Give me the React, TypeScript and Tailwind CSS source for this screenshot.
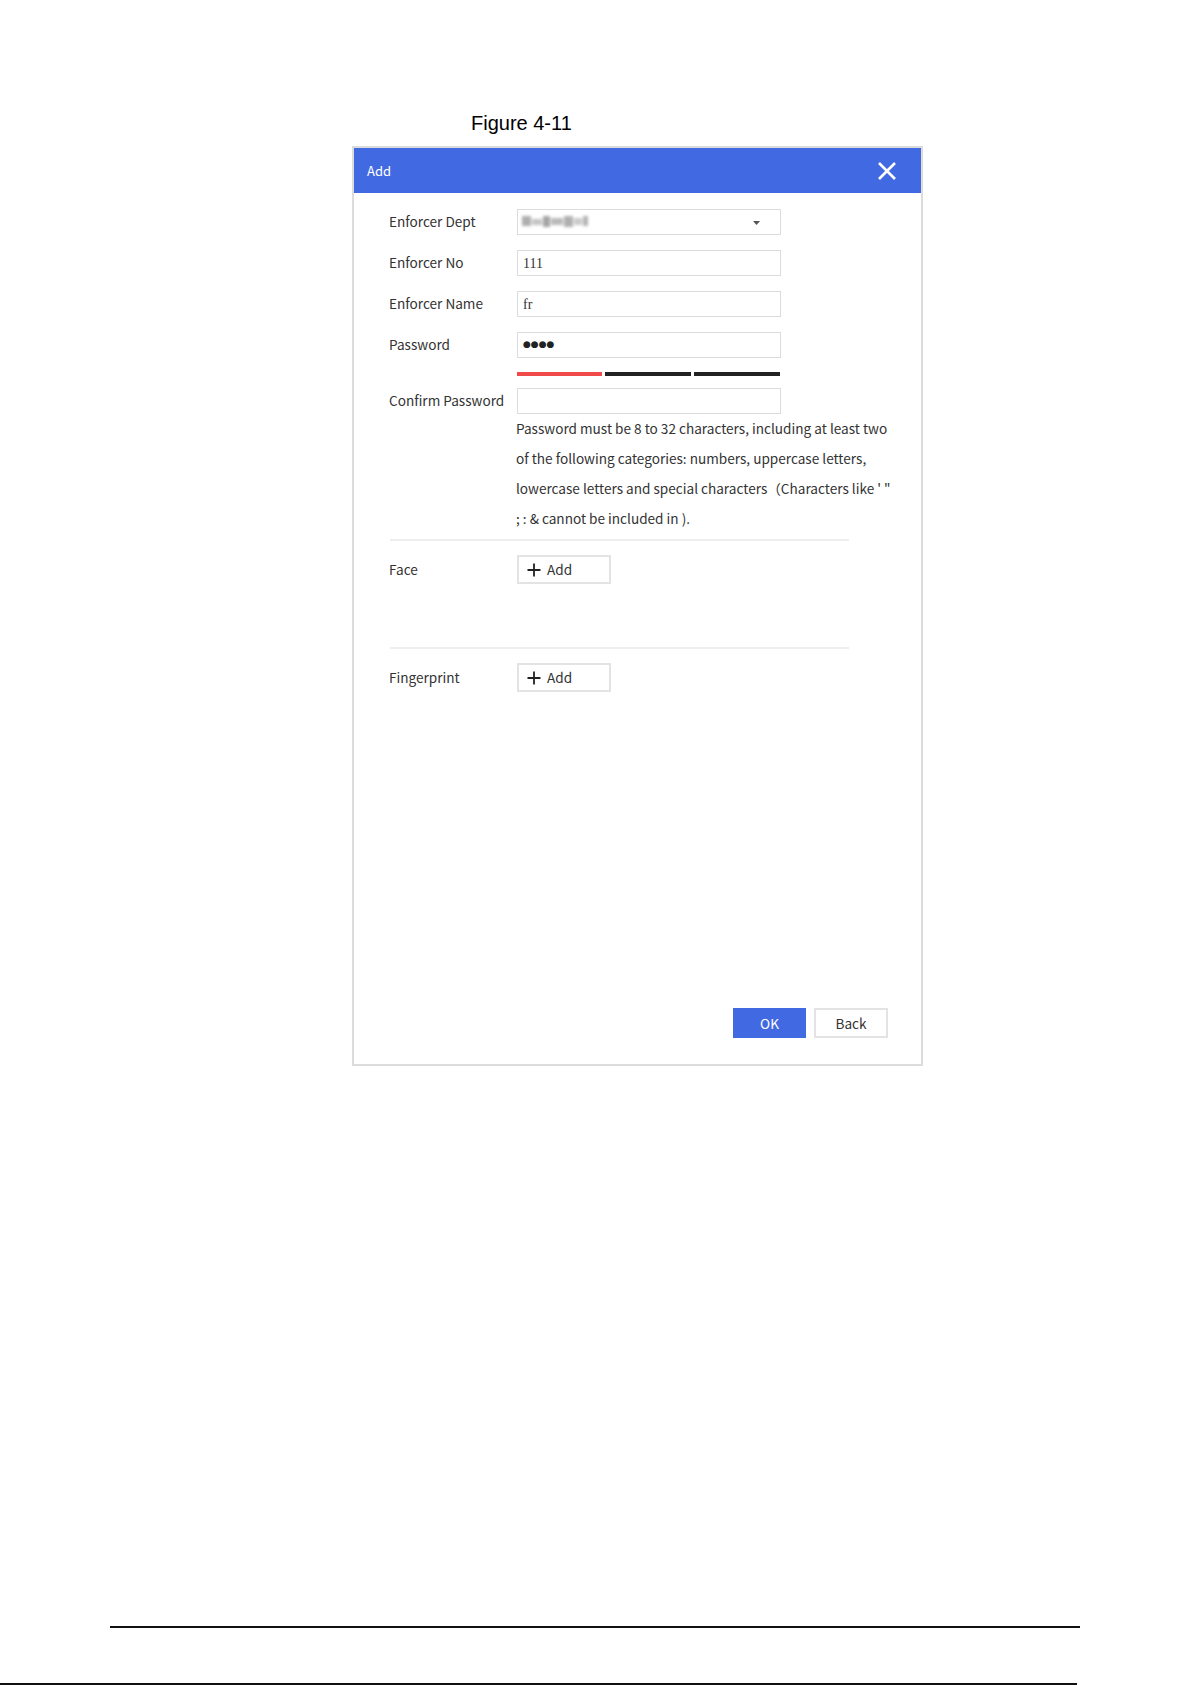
import React from "react";

const ui = { fontFamily: '"Noto Sans CJK SC", "Noto Sans", sans-serif' };

function Label({ children, offset }: { children: React.ReactNode; offset?: boolean }) {
  return (
    <div
      className={
        offset
          ? "w-[128px] h-[26px] mt-[2px] shrink-0 text-[13.6px] leading-[25px] text-[#333333]"
          : "w-[128px] h-[26px] shrink-0 text-[13.6px] leading-[25px] text-[#333333]"
      }
      style={ui}
    >
      {children}
    </div>
  );
}

function TextBox({ children }: { children?: React.ReactNode }) {
  return (
    <div className="w-[264px] h-[26px] border border-[#dcdcdc] bg-white flex items-center px-[5px] text-[14px] text-[#333333]">
      {children}
    </div>
  );
}

function Row({ label, children, offset }: { label: string; children: React.ReactNode; offset?: boolean }) {
  return (
    <div className="flex items-start">
      <Label offset={offset}>{label}</Label>
      {children}
    </div>
  );
}

function AddButton() {
  return (
    <div
      className="w-[94px] h-[29px] border-2 border-[#e3e3e3] flex items-center gap-[6px] pl-[8px] text-[13.6px] text-[#333333]"
      style={ui}
    >
      <svg width="14" height="14" viewBox="0 0 14 14">
        <path d="M7 0.5v13M0.5 7h13" stroke="#222" strokeWidth="1.8" />
      </svg>
      <span>Add</span>
    </div>
  );
}

export default function App() {
  return (
    <div className="w-[1192px] h-[1685px] bg-white flex flex-col">
      <div
        className="pt-[111px] pl-[471px] text-[20px] leading-[25px] text-black"
        style={{ fontFamily: '"Liberation Sans", Arial, sans-serif' }}
      >
        Figure 4-11
      </div>

      {/* dialog */}
      <div className="ml-[352px] mt-[10px] w-[571px] h-[920px] border-2 border-[#dcdcdc] bg-white flex flex-col">
        <div className="h-[45px] bg-[#4169e1] flex items-center justify-between pl-[13px] pr-[24px]">
          <span className="text-[13px] text-white" style={ui}>
            Add
          </span>
          <svg width="20" height="20" viewBox="0 0 20 20">
            <path d="M2 2l16 16M18 2L2 18" stroke="white" strokeWidth="2.6" />
          </svg>
        </div>

        <div className="flex flex-col pl-[35px] pt-[16px]">
          <div className="flex flex-col gap-[15px]">
            <Row label="Enforcer Dept">
              <div className="relative w-[264px] h-[26px] border border-[#dcdcdc] bg-white">
                <div className="absolute left-[4px] top-[6px] flex gap-[1px] blur-[1.5px] opacity-80">
                  <div className="w-[9px] h-[10px] bg-[#9a9a9a]" />
                  <div className="w-[10px] h-[6px] mt-[3px] bg-[#b5b5b5]" />
                  <div className="w-[7px] h-[11px] bg-[#8e8e8e]" />
                  <div className="w-[12px] h-[7px] mt-[2px] bg-[#a8a8a8]" />
                  <div className="w-[9px] h-[11px] bg-[#9c9c9c]" />
                  <div className="w-[8px] h-[7px] mt-[2px] bg-[#bdbdbd]" />
                  <div className="w-[5px] h-[10px] bg-[#a0a0a0]" />
                </div>
                <svg className="absolute left-[235px] top-[11px]" width="7" height="4" viewBox="0 0 7 4">
                  <path d="M0 0h7L3.5 4z" fill="#555" />
                </svg>
              </div>
            </Row>
            <Row label="Enforcer No">
              <TextBox>
                <span style={{ fontFamily: '"Liberation Serif", serif' }}>111</span>
              </TextBox>
            </Row>
            <Row label="Enforcer Name">
              <TextBox>
                <span style={{ fontFamily: '"Liberation Serif", serif' }}>fr</span>
              </TextBox>
            </Row>
            <Row label="Password">
              <TextBox>
                <span className="text-[9px] text-[#222]" style={{ fontFamily: '"DejaVu Sans", sans-serif' }}>
                  ●●●●
                </span>
              </TextBox>
            </Row>
          </div>

          {/* strength meter */}
          <div className="flex gap-[3px] ml-[128px] mt-[14px]">
            <div className="w-[85px] h-[4px] bg-[#f04a4a]" />
            <div className="w-[86px] h-[4px] bg-[#222222]" />
            <div className="w-[86px] h-[4px] bg-[#222222]" />
          </div>

          <div className="mt-[12px]">
            <Row label="Confirm Password">
              <TextBox />
            </Row>
          </div>

          <div className="ml-[127px] -mt-[1px] text-[13.6px] leading-[30px] text-[#333333] whitespace-nowrap" style={ui}>
            <div>Password must be 8 to 32 characters, including at least two</div>
            <div>of the following categories: numbers, uppercase letters,</div>
            <div>lowercase letters and special characters（Characters like ' "</div>
            <div>; : &amp; cannot be included in ).</div>
          </div>

          <div className="mt-[6px] ml-[1px] w-[459px] h-[2px] bg-[#eeeeee]" />

          <div className="h-[106px] pt-[14px]">
            <Row label="Face" offset>
              <AddButton />
            </Row>
          </div>

          <div className="ml-[1px] w-[459px] h-[2px] bg-[#eeeeee]" />

          <div className="pt-[14px]">
            <Row label="Fingerprint" offset>
              <AddButton />
            </Row>
          </div>
        </div>

        <div className="mt-auto mb-[26px] mr-[33px] flex justify-end gap-[8px]" style={ui}>
          <div className="w-[73px] h-[30px] bg-[#4169e1] text-white text-[13.6px] flex items-center justify-center">
            OK
          </div>
          <div className="w-[74px] h-[30px] border-2 border-[#e3e3e3] bg-white text-[#333333] text-[13.6px] flex items-center justify-center">
            Back
          </div>
        </div>
      </div>

      {/* page footer rules */}
      <div className="mt-auto ml-[110px] w-[970px] h-[2px] bg-[#111111]" />
      <div className="mt-[55px] w-[1077px] h-[2px] bg-[#111111]" />
    </div>
  );
}
